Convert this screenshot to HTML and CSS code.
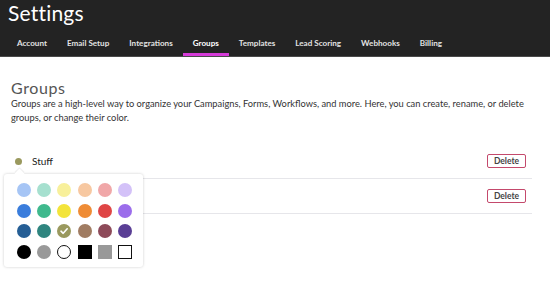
FILE: index.html
```html
<!DOCTYPE html>
<html lang="en">
  <head>
    <meta charset="UTF-8" />
    <title>Settings - Groups</title>
    <link rel="stylesheet" href="styles.css">
  </head>
  <body>
    <header class="topbar">
      <h1 class="page-title">Settings</h1>
      <nav class="tabs">
        <a class="tab">Account</a>
        <a class="tab">Email Setup</a>
        <a class="tab">Integrations</a>
        <a class="tab active">Groups</a>
        <a class="tab">Templates</a>
        <a class="tab">Lead Scoring</a>
        <a class="tab">Webhooks</a>
        <a class="tab">Billing</a>
      </nav>
    </header>

    <main class="content">
      <h2 class="section-title">Groups</h2>
      <p class="section-help">
        Groups are a high-level way to organize your Campaigns, Forms, Workflows, and more. Here, you can create, rename, or delete<br>
        groups, or change their color.
      </p>

      <ul class="group-list">
        <li class="group-row">
          <span class="dot olive"></span>
          <span class="group-name">Stuff</span>
          <button class="delete-btn">Delete</button>

          <div class="color-picker">
            <span class="swatch" style="background:#a6c5f5"></span>
            <span class="swatch" style="background:#a6e0cf"></span>
            <span class="swatch" style="background:#f8f09b"></span>
            <span class="swatch" style="background:#f7c8a1"></span>
            <span class="swatch" style="background:#f0a7a8"></span>
            <span class="swatch" style="background:#d3c1f8"></span>

            <span class="swatch" style="background:#3a7ddc"></span>
            <span class="swatch" style="background:#3fb98d"></span>
            <span class="swatch" style="background:#f3e43a"></span>
            <span class="swatch" style="background:#ef8c35"></span>
            <span class="swatch" style="background:#df4545"></span>
            <span class="swatch" style="background:#9b6deb"></span>

            <span class="swatch" style="background:#255e95"></span>
            <span class="swatch" style="background:#2f857f"></span>
            <span class="swatch selected" style="background:#9a995e">
              <svg viewBox="0 0 14 14" width="14" height="14"><path d="M4 7.2 L6.2 9.3 L10.2 4.8" fill="none" stroke="#fff" stroke-width="1.6" stroke-linecap="round" stroke-linejoin="round"/></svg>
            </span>
            <span class="swatch" style="background:#a07c62"></span>
            <span class="swatch" style="background:#8d4a59"></span>
            <span class="swatch" style="background:#5a3e95"></span>

            <span class="swatch" style="background:#000"></span>
            <span class="swatch" style="background:#999"></span>
            <span class="swatch outline"></span>
            <span class="swatch square" style="background:#000"></span>
            <span class="swatch square" style="background:#999"></span>
            <span class="swatch square outline"></span>
          </div>
        </li>
        <li class="group-row">
          <span class="dot"></span>
          <span class="group-name">Things</span>
          <button class="delete-btn">Delete</button>
        </li>
      </ul>
    </main>
  </body>
</html>
```

FILE: styles.css
```css
* {
  margin: 0;
  padding: 0;
  box-sizing: border-box;
}

html,
body {
  min-height: 100%;
}

body {
  font-family: Lato, "Liberation Sans", sans-serif;
  background: #fff;
  color: #333;
  min-height: 100vh;
}

.topbar {
  background: #232323;
  height: 57px;
  border-bottom: 1px solid #4a4a4a;
  display: flex;
  flex-direction: column;
  justify-content: space-between;
}

.page-title {
  color: #fff;
  font-size: 21px;
  line-height: 26px;
  font-weight: normal;
  letter-spacing: 0.2px;
  padding-left: 8px;
}

.tabs {
  display: flex;
  padding-left: 7px;
}

.tab {
  color: #e2e2e2;
  font-size: 8.1px;
  line-height: 10px;
  font-weight: bold;
  padding: 0 10px 5px;
  border-bottom: 3px solid transparent;
}

.tab.active {
  color: #fff;
  border-bottom-color: #d53bd8;
}

.content {
  padding: 22px 18px 0 11px;
}

.section-title {
  font-size: 16px;
  height: 18px;
  line-height: 18px;
  font-weight: normal;
  color: #555;
  letter-spacing: 0.6px;
}

.section-help {
  font-size: 9.3px;
  line-height: 14px;
  color: #333;
  white-space: nowrap;
}

.group-list {
  list-style: none;
  margin-top: 19px;
}

.group-row {
  position: relative;
  display: flex;
  align-items: center;
  height: 35px;
  padding-left: 4px;
  border-bottom: 1px solid #e6e6ea;
}

.dot {
  width: 7px;
  height: 7px;
  border-radius: 50%;
  background: #9a995e;
  margin-right: 10px;
}

.group-name {
  font-size: 10px;
  color: #222;
  flex: 1;
}

.delete-btn {
  font-family: inherit;
  font-size: 8.5px;
  font-weight: bold;
  color: #444;
  background: #fff;
  border: 1px solid #c4496c;
  border-radius: 2px;
  width: 39px;
  height: 14px;
  margin-right: 6px;
}

.color-picker {
  position: absolute;
  top: 30px;
  left: -7px;
  width: 139px;
  background: #fff;
  border-radius: 3px;
  box-shadow: 0 0 3px rgba(0, 0, 0, 0.2);
  padding: 9px 11px 8px 13px;
  display: grid;
  grid-template-columns: repeat(6, 14px);
  column-gap: 6.2px;
  row-gap: 6.5px;
  z-index: 2;
}

.color-picker::before {
  content: "";
  position: absolute;
  top: -4px;
  left: 12px;
  width: 7px;
  height: 7px;
  background: #fff;
  transform: rotate(45deg);
  box-shadow: -1px -1px 1px rgba(0, 0, 0, 0.08);
}

.swatch {
  width: 14px;
  height: 14px;
  border-radius: 50%;
  display: flex;
}

.swatch.square {
  border-radius: 0;
}

.swatch.outline {
  border: 1.5px solid #111;
  background: #fff;
}

.swatch.square.outline {
  border-width: 1px;
}
```
